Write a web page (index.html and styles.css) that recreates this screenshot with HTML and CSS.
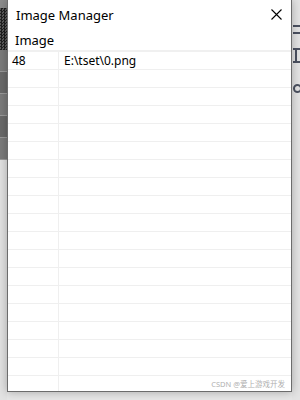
FILE: index.html
```html
<!DOCTYPE html>
<html lang="en">

<head>
    <meta charset="UTF-8">
    <title>Image Manager</title>
    <link rel="stylesheet" href="styles.css">
</head>

<body>
    <div class="desk_left">
        <div class="dl_top"></div>
        <div class="dl_check"></div>
        <div class="dl_bar"></div>
        <div class="dl_bar dark"></div>
        <div class="dl_bar"></div>
        <div class="dl_bar dark"></div>
        <div class="dl_bar"></div>
        <div class="dl_light"></div>
    </div>

    <div class="window">
        <div class="title_bar">
            <span class="title">Image Manager</span>
            <svg class="close" width="11" height="11" viewBox="0 0 11 11">
                <path d="M0.5 0.5 L10.5 10.5 M10.5 0.5 L0.5 10.5" stroke="#000" stroke-width="1.1" fill="none" />
            </svg>
        </div>
        <div class="list_head">Image</div>
        <div class="list_body">
            <div class="row"><div class="c1">48</div><div class="c2">E:\tset\0.png</div></div>
            <div class="row"><div class="c1"></div><div class="c2"></div></div>
            <div class="row"><div class="c1"></div><div class="c2"></div></div>
            <div class="row"><div class="c1"></div><div class="c2"></div></div>
            <div class="row"><div class="c1"></div><div class="c2"></div></div>
            <div class="row"><div class="c1"></div><div class="c2"></div></div>
            <div class="row"><div class="c1"></div><div class="c2"></div></div>
            <div class="row"><div class="c1"></div><div class="c2"></div></div>
            <div class="row"><div class="c1"></div><div class="c2"></div></div>
            <div class="row"><div class="c1"></div><div class="c2"></div></div>
            <div class="row"><div class="c1"></div><div class="c2"></div></div>
            <div class="row"><div class="c1"></div><div class="c2"></div></div>
            <div class="row"><div class="c1"></div><div class="c2"></div></div>
            <div class="row"><div class="c1"></div><div class="c2"></div></div>
            <div class="row"><div class="c1"></div><div class="c2"></div></div>
            <div class="row"><div class="c1"></div><div class="c2"></div></div>
            <div class="row"><div class="c1"></div><div class="c2"></div></div>
            <div class="row"><div class="c1"></div><div class="c2"></div></div>
            <div class="row last"><div class="c1"></div><div class="c2"></div></div>
        </div>
        <div class="watermark">CSDN @爱上游戏开发</div>
    </div>

    <div class="desk_right">
        <div class="ico eq"></div>
        <div class="ico ibar"></div>
        <div class="ico dot"></div>
    </div>
</body>

</html>
```

FILE: styles.css
```css
* {
    margin: 0;
    padding: 0;
    box-sizing: border-box;
}

body {
    width: 300px;
    height: 400px;
    overflow: hidden;
    display: flex;
    background: #e6e6e6;
    font-family: "Noto Sans", "Noto Sans CJK SC", sans-serif;
    color: #000;
}

/* desktop behind the window */
.desk_left {
    width: 7px;
    flex-shrink: 0;
    display: flex;
    flex-direction: column;
}

.dl_top {
    height: 8px;
    background: #8c8c8c;
}

.dl_check {
    height: 42px;
    background: repeating-conic-gradient(#1e1e1e 0 25%, #5a5a5a 0 50%) 0 0 / 3px 3px;
}

.dl_bar {
    height: 22px;
    background: #7b7b7b;
    border-bottom: 1px solid #9a9a9a;
}

.dl_bar.dark {
    background: #6a6a6a;
}

.dl_light {
    flex: 1;
    background: #e2e2e2;
}

.desk_right {
    flex: 1;
    background: #e3e3e3;
    display: flex;
    flex-direction: column;
    padding-top: 25px;
}

.ico {
    margin-left: 1px;
}

.eq {
    width: 8px;
    height: 9px;
    border-top: 2px solid #4b5160;
    border-bottom: 2px solid #4b5160;
}

.ibar {
    margin-top: 14px;
    width: 8px;
    height: 15px;
    border-top: 2px solid #4b5160;
    border-bottom: 2px solid #4b5160;
    background: linear-gradient(#4b5160, #4b5160) 2px 0 / 2px 100% no-repeat;
}

.dot {
    margin-top: 21px;
    width: 9px;
    height: 9px;
    border: 2px solid #4b5160;
    border-radius: 50%;
}

/* the dialog */
.window {
    position: relative;
    width: 285px;
    height: 392px;
    flex-shrink: 0;
    background: #fff;
    border: 1px solid #6c6c6c;
    border-top: none;
    box-shadow: 0 0 9px rgba(0, 0, 0, 0.28);
    display: flex;
    flex-direction: column;
    z-index: 1;
}

.title_bar {
    height: 30px;
    display: flex;
    align-items: center;
    justify-content: space-between;
    padding: 0 9px 0 8px;
}

.title {
    font-size: 13px;
    margin-top: -1px;
}

.close {
    margin-top: -2px;
}

.list_head {
    height: 22px;
    padding: 1px 0 0 7px;
    font-size: 13px;
    border-bottom: 2px solid #f0f0f0;
}

.list_body {
    flex: 1;
    overflow: hidden;
}

.row {
    display: flex;
    height: 18px;
    border-bottom: 1px solid #efefef;
    font-size: 12px;
    line-height: 17px;
}

.row.last {
    border-bottom: none;
}

.c1 {
    width: 51px;
    padding-left: 4px;
    border-right: 1px solid #efefef;
}

.c2 {
    flex: 1;
    padding-left: 5px;
}

.watermark {
    position: absolute;
    right: 6px;
    bottom: 2px;
    font-size: 7.5px;
    color: #b0b0b0;
    background: #fff;
}
```
